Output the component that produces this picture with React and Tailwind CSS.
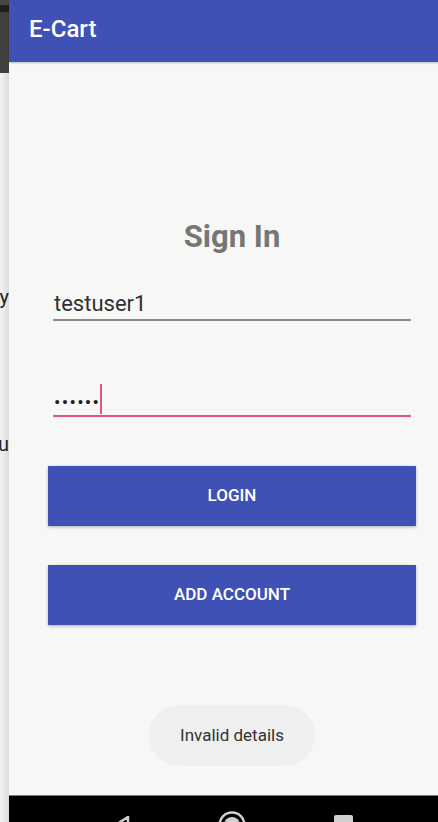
import React from "react";

export default function App() {
  return (
    <div className="flex w-[438px] h-[822px] overflow-hidden bg-[#f7f8f6] font-['Roboto',sans-serif]">
      {/* left sliver of another window */}
      <div className="w-[9px] shrink-0 flex flex-col overflow-hidden">
        <div className="h-[5px] bg-[#474747]" />
        <div className="h-[7px] bg-[#1e1e1e]" />
        <div className="h-[61px] bg-[#404040]" />
        <div className="flex-1 flex flex-col bg-gradient-to-r from-[#f3f3f3] to-[#dcdcdc] overflow-hidden">
          <div className="mt-[211px] h-[26px] flex justify-end">
            <span className="text-[20px] leading-[26px] text-[#222] whitespace-nowrap">copy</span>
          </div>
          <div className="mt-[121px] h-[26px] flex justify-end">
            <span className="text-[20px] leading-[26px] text-[#222] whitespace-nowrap">you</span>
          </div>
        </div>
      </div>

      {/* phone screen */}
      <div className="w-[446px] shrink-0 flex flex-col h-full">
        <div className="h-[62px] shrink-0 bg-[#3f51b5] flex items-center pl-[20px] shadow-[0_1px_2px_rgba(0,0,0,0.25)] relative z-10">
          <span className="text-white text-[24px] font-medium leading-[28px] -mt-[4px]">E-Cart</span>
        </div>

        <div className="flex-1 flex flex-col bg-[#f7f8f6]">
          <div className="mt-[157px] text-center text-[31px] leading-[36px] font-bold text-[#767676]">Sign In</div>

          <div className="mt-[36px] mx-[44px] flex flex-col">
            <div className="pl-[1px] text-[22px] leading-[26px] text-[#303030]">testuser1</div>
            <div className="mt-[2px] h-[2px] bg-[#8a8a8a]" />
          </div>

          <div className="mt-[66px] mx-[44px] flex flex-col">
            <div className="h-[26px] flex items-center pl-[1px]">
              <span className="text-[19px] leading-[26px] tracking-[1.3px] text-[#222] mt-[6px]">••••••</span>
              <div className="w-[2px] h-[30px] bg-[#e0528a] -mt-[2px]" />
            </div>
            <div className="mt-[2px] h-[2px] bg-[#e0528a]" />
          </div>

          <button className="mt-[49px] mx-[39px] h-[60px] bg-[#3f51b5] text-white text-[17px] font-medium shadow-[0_1px_3px_rgba(0,0,0,0.3)]">
            LOGIN
          </button>
          <button className="mt-[39px] mx-[39px] h-[60px] bg-[#3f51b5] text-white text-[17px] font-medium shadow-[0_1px_3px_rgba(0,0,0,0.3)]">
            ADD ACCOUNT
          </button>

          <div className="mt-[80px] self-center w-[166px] h-[61px] rounded-full bg-[#efefef] flex items-center justify-center text-[17px] text-[#333]">
            Invalid details
          </div>
        </div>

        <div className="h-[27px] shrink-0 bg-black border-t-[1px] border-[#7a7a7a] flex justify-center gap-[71px] overflow-hidden">
          <div className="w-[40px] flex justify-center pt-[20px]">
            <svg width="18" height="20" viewBox="0 0 18 20">
              <path d="M2 10 L16 1 L16 19 Z" fill="none" stroke="#cfcfcf" strokeWidth="2.5" strokeLinejoin="round" />
            </svg>
          </div>
          <div className="w-[40px] flex justify-center pt-[15px]">
            <svg width="28" height="28" viewBox="0 0 28 28">
              <circle cx="14" cy="14" r="12.5" fill="none" stroke="#d0d0d0" strokeWidth="2.5" />
              <circle cx="14" cy="14" r="8" fill="#d0d0d0" />
            </svg>
          </div>
          <div className="w-[40px] flex justify-center pt-[19px]">
            <div className="w-[19px] h-[19px] bg-[#d0d0d0] rounded-[2px]" />
          </div>
        </div>
      </div>
    </div>
  );
}
